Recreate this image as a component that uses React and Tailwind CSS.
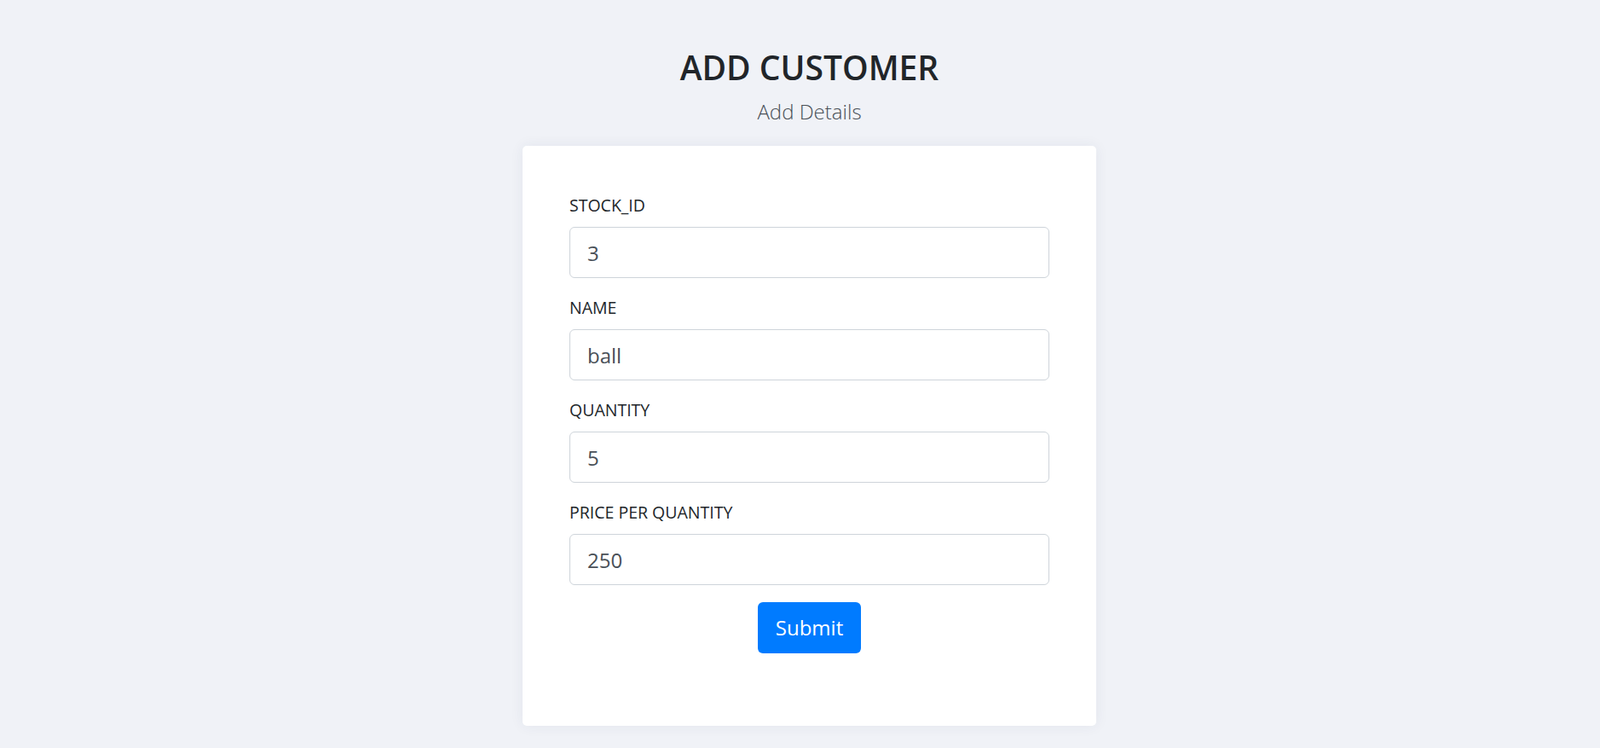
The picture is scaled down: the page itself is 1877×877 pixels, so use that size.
import React, { useState } from 'react';

const fields = [
  { id: 'stock_id', label: 'STOCK_ID', value: '3' },
  { id: 'name', label: 'NAME', value: 'ball' },
  { id: 'quantity', label: 'QUANTITY', value: '5' },
  { id: 'price', label: 'PRICE PER QUANTITY', value: '250' },
];

const Field = ({ id, label, value, onChange }) => (
  <div className="mb-5">
    <label htmlFor={id} className="block mb-[10px] text-[19.5px] leading-[30px] text-[#212529]">
      {label}
    </label>
    <input
      id={id}
      type="text"
      value={value}
      onChange={(e) => onChange(id, e.target.value)}
      className="block w-full h-[60px] px-5 text-[24px] text-[#495057] bg-white border border-[#ced4da] rounded-[6px] outline-none"
    />
  </div>
);

const App = () => {
  const [values, setValues] = useState(
    Object.fromEntries(fields.map((f) => [f.id, f.value]))
  );

  const handleChange = (id, v) => setValues({ ...values, [id]: v });

  return (
    <div
      className="min-h-screen bg-[#f0f2f7] pl-[22px] pt-[55px] flex flex-col items-center"
      style={{ fontFamily: '"Open Sans", "Noto Sans", sans-serif' }}
    >
      <h1 className="text-[39px] leading-[48px] font-semibold text-[#212529]">ADD CUSTOMER</h1>
      <p className="mt-[10px] text-[24px] leading-[36px] font-light text-[#495057]">Add Details</p>

      <div className="mt-[22px] w-[673px] bg-white rounded-[5px] shadow-[0_0_16px_rgba(40,50,100,0.07)] px-[55px] pt-[55px] pb-[85px]">
        <form onSubmit={(e) => e.preventDefault()}>
          {fields.map((f) => (
            <Field key={f.id} id={f.id} label={f.label} value={values[f.id]} onChange={handleChange} />
          ))}
          <div className="flex justify-center">
            <button
              type="submit"
              className="h-[60px] w-[121px] bg-[#007bff] text-white text-[24px] rounded-[6px]"
            >
              Submit
            </button>
          </div>
        </form>
      </div>
    </div>
  );
};

export default App;
